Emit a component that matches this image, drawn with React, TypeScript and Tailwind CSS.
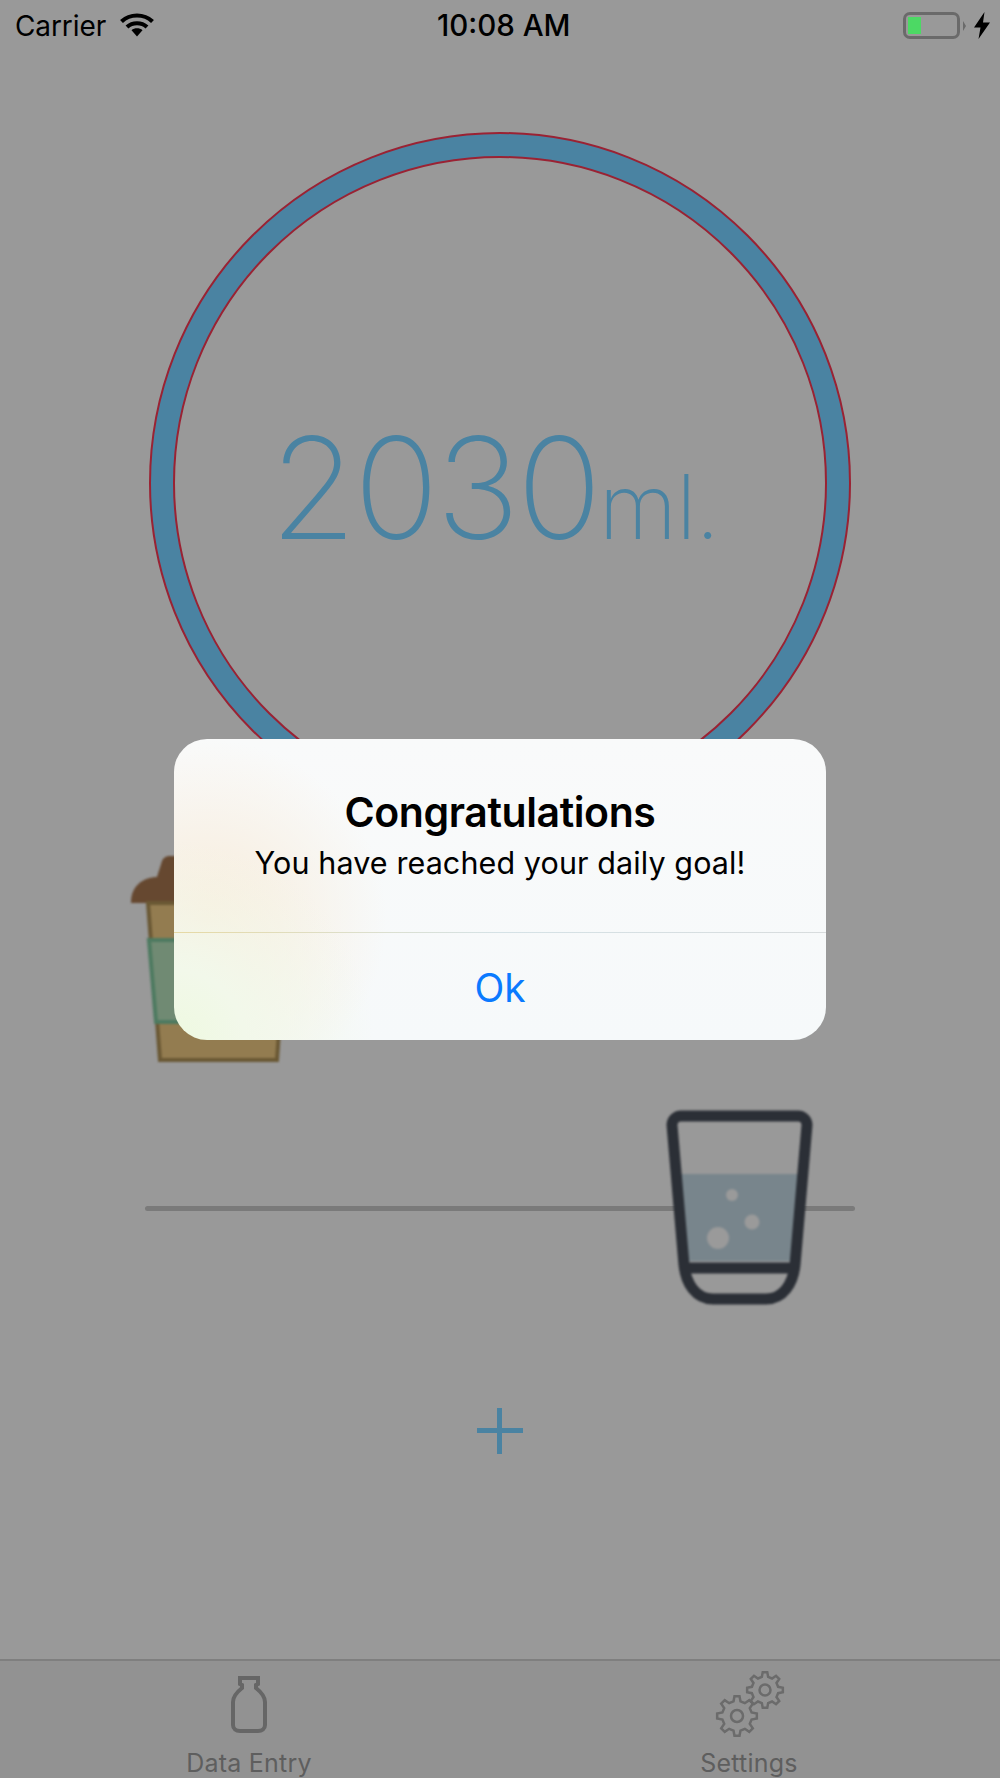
import React from 'react';

const font = { fontFamily: 'Inter, "Noto Sans", sans-serif' };

// builds the outline of a cog wheel with square-ish teeth
const gearPath = (cx: number, cy: number, outer: number, inner: number, teeth: number) => {
  const pts: string[] = [];
  const step = (Math.PI * 2) / teeth;
  for (let i = 0; i < teeth; i++) {
    const a = i * step - Math.PI / 2;
    const list: [number, number][] = [
      [inner, a - step * 0.3],
      [outer, a - step * 0.16],
      [outer, a + step * 0.16],
      [inner, a + step * 0.3],
    ];
    list.forEach(([r, t]) => pts.push(`${(cx + r * Math.cos(t)).toFixed(2)} ${(cy + r * Math.sin(t)).toFixed(2)}`));
  }
  return `M${pts.join('L')}Z`;
};

const StatusBar = () => (
  <div className="h-[53px] shrink-0 flex items-center justify-between pl-[15px] pr-[10px] pb-[2px] text-black relative">
    <div className="flex items-center gap-[14px]">
      <span className="text-[28px] leading-none tracking-[-0.1px]">Carrier</span>
      <svg width="34" height="25" viewBox="0 0 34 25" className="mb-[3px]">
        <path d="M1.5 9.5C10 1.5 24 1.5 32.5 9.5" fill="none" stroke="#000" strokeWidth="4.2" />
        <path d="M7 15C12.5 10 21.5 10 27 15" fill="none" stroke="#000" strokeWidth="4.2" />
        <path d="M11.5 18.2C14.5 15.6 19.5 15.6 22.5 18.2L17 24.5Z" fill="#000" />
      </svg>
    </div>
    <span className="absolute left-[437px] text-[29.5px] leading-none font-medium">10:08 AM</span>
    <div className="flex items-center">
      <div className="w-[57px] h-[27px] rounded-[7px] border-[3px] border-[#6a6a6a] p-[2px]">
        <div className="w-[13px] h-full bg-[#4cd964]" />
      </div>
      <div className="w-0 h-0 ml-[3px] border-y-[5px] border-y-transparent border-l-[3px] border-l-[#6a6a6a]" />
      <svg width="16" height="27" viewBox="0 0 16 27" className="ml-[8px]">
        <path d="M10.5 0L0 15.5H6.5L4.5 27L16 10.5H9Z" fill="#000" />
      </svg>
    </div>
  </div>
);

const Cup = () => (
  <svg width="176" height="207" viewBox="0 0 176 207" className="blur-[0.9px]">
    <path d="M26 25L32 6C33 3 36 1 40 1H136C140 1 143 3 144 6L150 25Z" fill="#664830" />
    <path d="M1 47C1 32 12 22 28 22H148C164 22 175 32 175 47V48H1Z" fill="#664830" />
    <path d="M18 48H158L147 205H30Z" fill="#937c50" stroke="#6a5834" strokeWidth="4" />
    <path d="M19 85H157L150 167H26Z" fill="#708a73" stroke="#4d7a60" strokeWidth="4" />
  </svg>
);

const Glass = () => (
  <svg width="147" height="195" viewBox="0 0 147 195" className="blur-[0.8px]">
    <path d="M14 64H133L127 151H21Z" fill="#78858c" />
    <circle cx="52" cy="128" r="11" fill="#9a9a9a" />
    <circle cx="86" cy="112" r="7.5" fill="#9a9a9a" />
    <circle cx="66" cy="85" r="6" fill="#9a9a9a" />
    <path
      d="M15 6H132C137 6 141 10 141 15L129 155C127 174 117 189 100 189H47C30 189 20 174 18 155L6 15C6 10 10 6 15 6Z"
      fill="none"
      stroke="#2b2f36"
      strokeWidth="11"
    />
    <path d="M18 158H129" fill="none" stroke="#2b2f36" strokeWidth="11" />
  </svg>
);

const Bottle = () => (
  <svg width="36" height="58" viewBox="0 0 36 58" className="blur-[0.7px]">
    <path
      d="M9 3H27V9L25 10V13C30 17 34 21 34 27V50C34 54 31 56 27 56H9C5 56 2 54 2 50V27C2 21 6 17 11 13V10L9 9Z"
      fill="none"
      stroke="#666"
      strokeWidth="4"
    />
  </svg>
);

const Gears = () => (
  <svg width="70" height="68" viewBox="0 0 70 68" className="blur-[0.7px]">
    <path d={gearPath(50, 20, 18, 13.5, 8)} fill="none" stroke="#6b6b6b" strokeWidth="2.5" />
    <circle cx="50" cy="20" r="5.5" fill="none" stroke="#6b6b6b" strokeWidth="2.5" />
    <path d={gearPath(22, 46, 20, 15, 8)} fill="none" stroke="#6b6b6b" strokeWidth="2.5" />
    <circle cx="22" cy="46" r="6" fill="none" stroke="#6b6b6b" strokeWidth="2.5" />
  </svg>
);

const TabItem = ({ label, className, children }: { label: string; className: string; children: React.ReactNode }) => (
  <div className={`absolute top-0 w-[200px] flex flex-col items-center ${className}`}>
    <div className="h-[92px] flex items-end justify-center">{children}</div>
    <span className="text-[25px] leading-none tracking-[0.2px] text-[#5e5e5e] mt-[-2px]">{label}</span>
  </div>
);

export default function App() {
  return (
    <div style={font} className="relative w-[1000px] h-[1778px] overflow-hidden bg-[#999999] flex flex-col">
      <StatusBar />

      <main className="flex-1 flex flex-col">
        <div className="mt-[79px] self-center w-[702px] h-[702px] rounded-full bg-[#4a83a2] border-[2.5px] border-[#9a2233] flex items-center justify-center">
          <div className="w-[654px] h-[654px] rounded-full bg-[#999999] border-[2.5px] border-[#9a2233] flex items-baseline justify-center pt-[259px] pr-[11px]">
            <span className="text-[141px] leading-none font-extralight tracking-[-3px] text-[#4a83a2]">2030</span>
            <span className="text-[90px] leading-none font-extralight tracking-[-1px] text-[#4a83a2]">ml.</span>
          </div>
        </div>

        <div className="mt-[21px] ml-[130px]">
          <Cup />
        </div>

        <div className="relative mt-[144px] mx-[145px] h-[5px] rounded-full bg-[#7a7a7a]">
          <div className="absolute left-[521px] top-[-96px]">
            <Glass />
          </div>
        </div>

        <div className="mt-[197px] self-center relative w-[46px] h-[46px]">
          <div className="absolute left-0 right-0 top-[20px] h-[5px] bg-[#4a83a2]" />
          <div className="absolute top-0 bottom-0 left-[20px] w-[5px] bg-[#4a83a2]" />
        </div>
      </main>

      <footer className="relative h-[119px] shrink-0 border-t-[2px] border-[#7f7f7f] bg-[#929292]">
        <TabItem label="Data Entry" className="left-[149px]">
          <div className="mb-[20px]"><Bottle /></div>
        </TabItem>
        <TabItem label="Settings" className="left-[649px]">
          <div className="ml-[1px] mb-[15px]"><Gears /></div>
        </TabItem>
      </footer>

      {/* alert sits over the dimmed page */}
      <div className="absolute left-[174px] top-[739px] w-[652px] h-[301px] rounded-[33px] overflow-hidden flex flex-col bg-[radial-gradient(circle_at_0%_100%,#eef9e0_0,#f2f8ea_70px,transparent_200px),radial-gradient(circle_at_5%_60%,#f9eddc_0,#f8f1e6_70px,transparent_180px),linear-gradient(#f9fafa,#f6f9fa)]">
        <div className="h-[193px] flex flex-col items-center pt-[49px] text-black">
          <span className="text-[41px] leading-[48px] font-semibold tracking-[-0.4px]">Congratulations</span>
          <span className="text-[30.5px] leading-[40px] mt-[7px] tracking-[0.1px]">You have reached your daily goal!</span>
        </div>
        <div className="h-[1px] bg-gradient-to-r from-[#e6d9a4] via-[#d5e2e6] to-[#d8dcdd]" />
        <div className="flex-1 flex items-center justify-center pt-[2px]">
          <span className="text-[39px] leading-none text-[#0a7aff]">Ok</span>
        </div>
      </div>
    </div>
  );
}
